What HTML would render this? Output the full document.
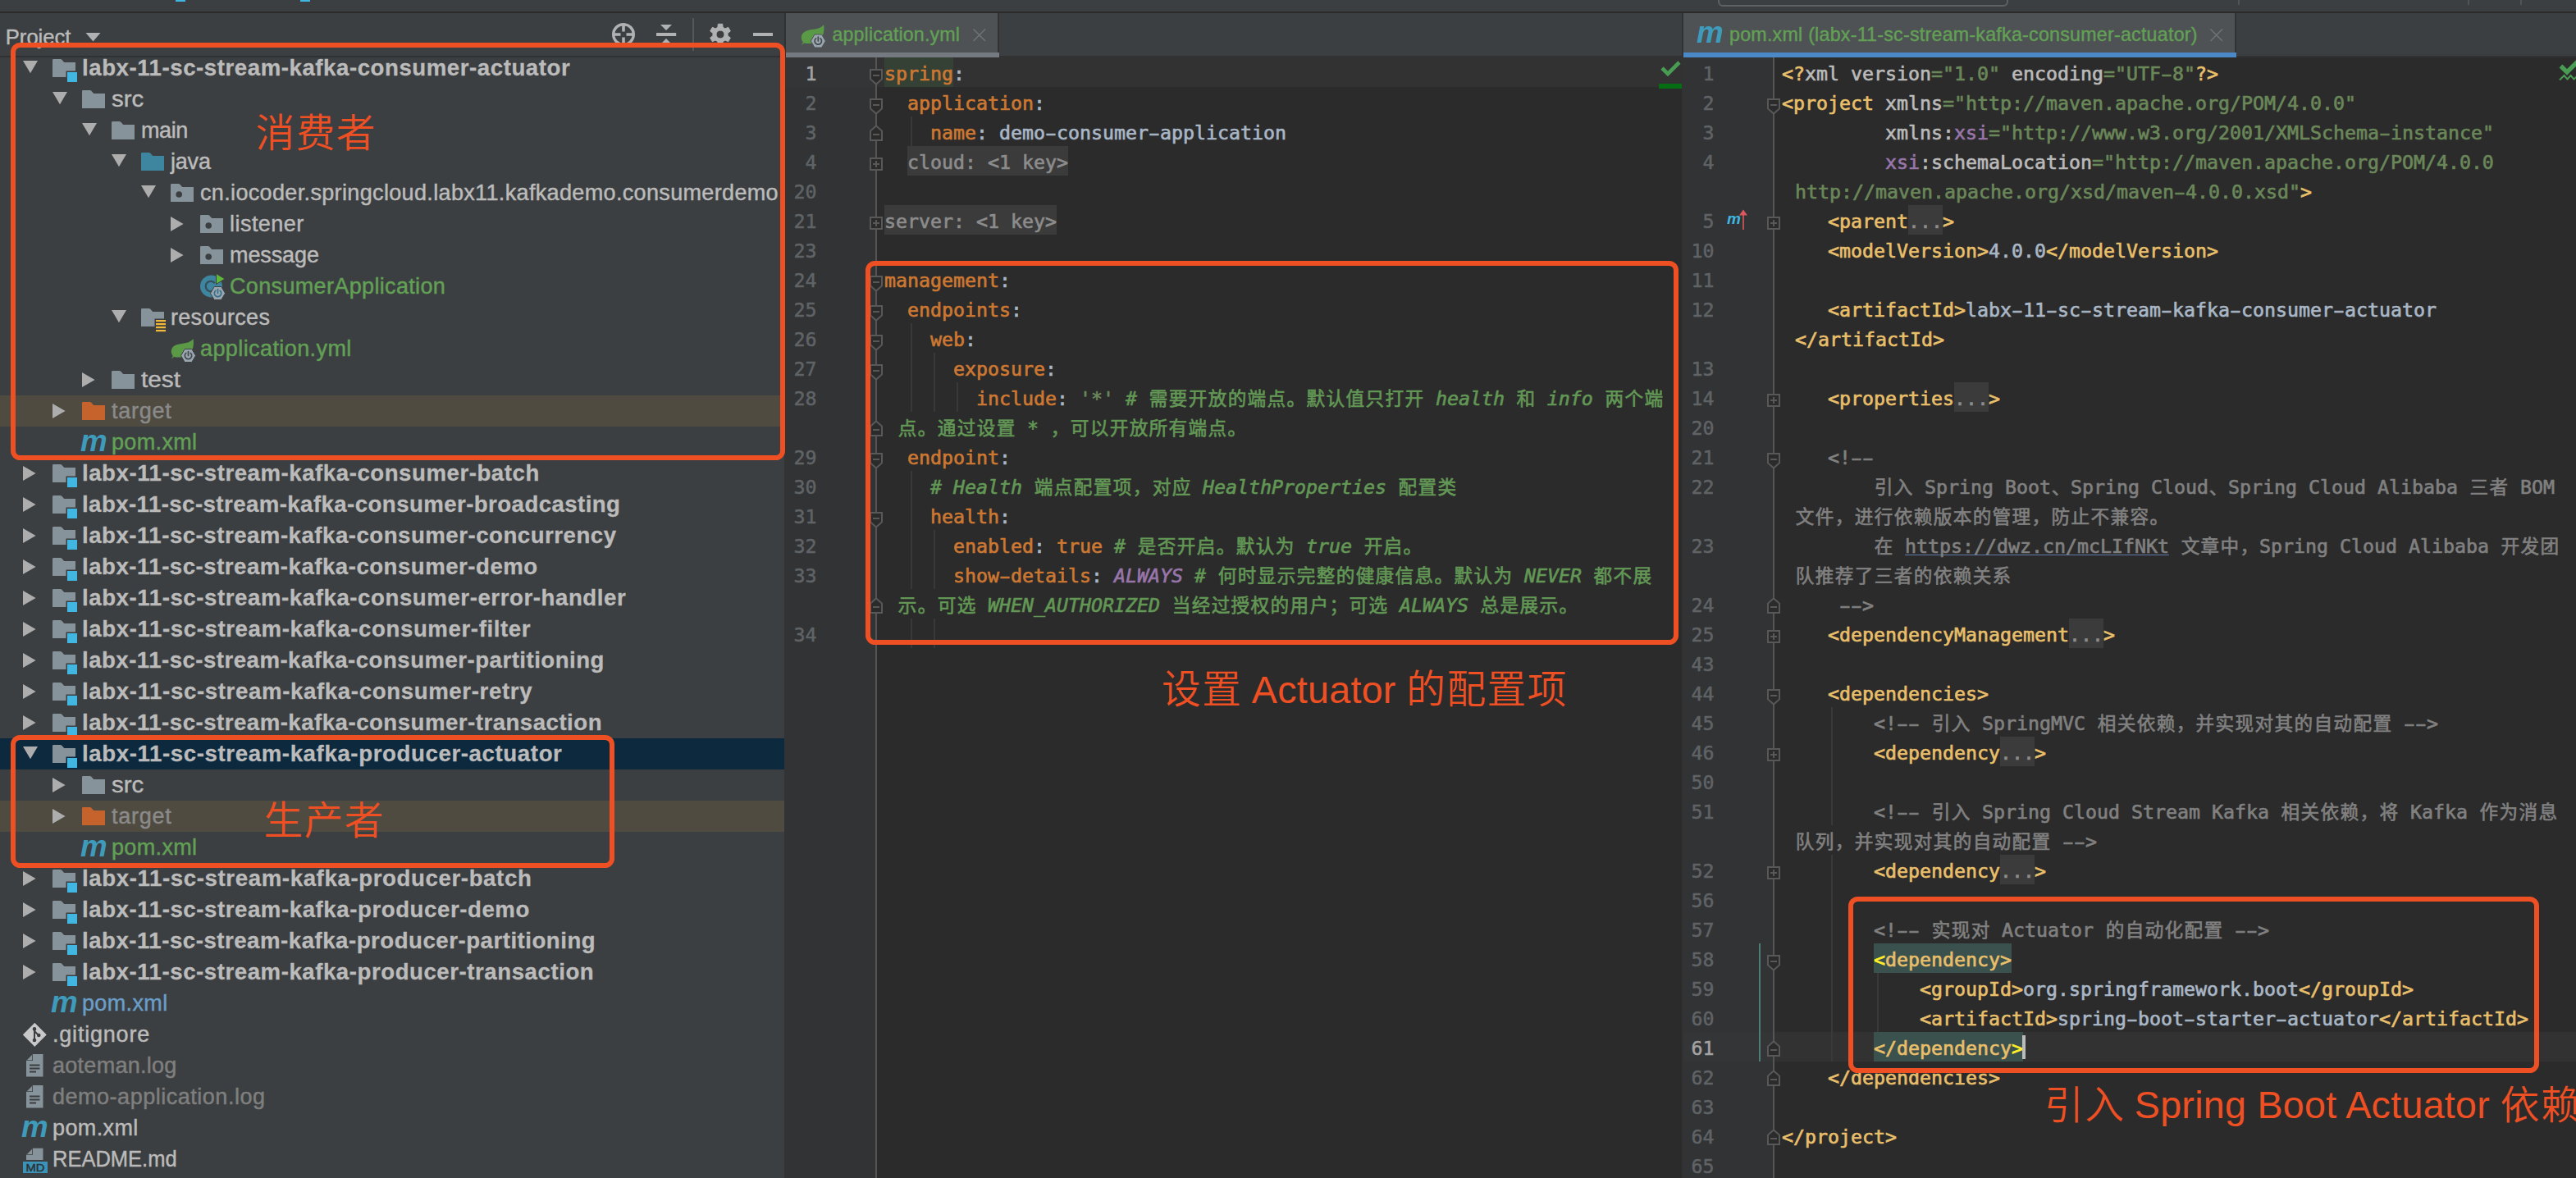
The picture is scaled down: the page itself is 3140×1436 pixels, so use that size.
<!DOCTYPE html><html><head><meta charset="utf-8"><title>IDE</title><style>
*{box-sizing:border-box}
html,body{margin:0;padding:0}
body{width:3140px;height:1436px;position:relative;overflow:hidden;background:#3c3f41;font-family:"Liberation Sans","Noto Sans CJK SC",sans-serif;color:#bbbbbb}
.abs,.abs *{position:absolute}
div{position:absolute}
span{position:static}
svg{position:absolute;overflow:visible}
.row{left:0;width:956px;height:38px}
.tt{-webkit-text-stroke:0.45px;white-space:pre;font-size:27px;line-height:38px;height:38px;top:0px;letter-spacing:-0.12px}
.b{-webkit-text-stroke:0.3px;font-weight:bold;font-size:27.6px;letter-spacing:0.3px}
.ln{-webkit-text-stroke:0.5px;white-space:pre;font-family:"DejaVu Sans Mono","Liberation Mono","Noto Sans CJK SC",monospace;font-size:23.25px;line-height:36px;height:36px;color:#606366;text-align:right;width:60px}
.cl{-webkit-text-stroke:0.65px;white-space:pre;font-family:"DejaVu Sans Mono","Liberation Mono","Noto Sans CJK SC",monospace;font-size:23.25px;line-height:36px;height:36px;color:#a9b7c6}
.cj{font-family:"Noto Sans CJK SC","WenQuanYi Zen Hei",sans-serif;font-size:22.6px;letter-spacing:1.4px;font-style:normal;line-height:0;position:relative;top:0.4px;left:0.7px}
.k{color:#cc7832}.s{color:#6a8759}.c{color:#629755;font-style:italic}.p{color:#9876aa}.pi{color:#9876aa;font-style:italic}
.t{color:#e8bf6a}.a{color:#bababa}.g{color:#808080}.f{color:#8c8c8c;background:#3b3b3b;display:inline-block;height:36px;line-height:36px;vertical-align:top;margin-top:-2px;padding-top:2px}
.w{display:inline-block;width:16px}.h{display:inline-block;transform:scaleX(1.7)}.y{color:#ffef28}.lk{color:#808080;text-decoration:underline;text-decoration-color:#5f7aa8;text-decoration-thickness:1.4px;text-underline-offset:1.6px;text-decoration-skip-ink:none}
.ann{color:#ef5023;font-size:47px;letter-spacing:0;line-height:60px;white-space:pre;font-family:"Liberation Sans","Noto Sans CJK SC",sans-serif}
.box{border:6.3px solid #ef5023;border-radius:11.5px}
</style></head><body>
<div style="left:0;top:0;width:3140px;height:14px;background:#3c3f41"></div>
<div style="left:0;top:14px;width:3140px;height:2px;background:#2b2b2b"></div>
<div style="left:214px;top:0;width:12px;height:2px;background:#40b6e0"></div>
<div style="left:366px;top:0;width:12px;height:2px;background:#40b6e0"></div>
<div style="left:2094px;top:-10px;width:354px;height:18px;border:2px solid #5e6163;border-radius:6px;background:#3c3f41"></div>
<div style="left:2728px;top:0;width:2px;height:6px;background:#515456"></div>
<div style="left:3008px;top:0;width:2px;height:6px;background:#515456"></div>
<div style="left:3072px;top:0;width:2px;height:6px;background:#515456"></div>
<div id="tree" style="left:0;top:16px;width:956px;height:1420px;background:#3c3f41;overflow:hidden">
<div style="left:6.8px;top:12.5px;font-size:25.6px;line-height:32px;color:#bbbbbb;white-space:pre;-webkit-text-stroke:0.4px">Project</div>
<svg style="left:104px;top:24px" width="20" height="12" viewBox="0 0 20 12"><path d="M0.5,0 L18.5,0 L9.5,10.5 Z" fill="#afb1b3"/></svg>
<svg style="left:744px;top:10px" width="32" height="32" viewBox="0 0 32 32"><circle cx="16" cy="16" r="12.3" fill="none" stroke="#afb1b3" stroke-width="3.4"/><path d="M16,4 L16,12.5 M16,19.5 L16,28 M4,16 L12.5,16 M19.5,16 L28,16" stroke="#afb1b3" stroke-width="3.6"/></svg>
<svg style="left:798px;top:12px" width="28" height="30" viewBox="0 0 28 30"><rect x="2" y="12" width="24.2" height="4" fill="#afb1b3"/><path d="M7,2 L21,2 L14,9 Z" fill="#afb1b3"/><path d="M7,26 L21,26 L14,19 Z" fill="#afb1b3"/></svg>
<div style="left:844px;top:6px;width:2px;height:40px;background:#55585a"></div>
<svg style="left:862px;top:10px" width="32" height="32" viewBox="0 0 32 32"><path fill-rule="evenodd" d="M12.88,7.34 L13.30,3.28 L18.70,3.28 L19.12,7.34 L21.94,8.97 L25.66,7.30 L28.36,11.98 L25.05,14.37 L25.05,17.63 L28.36,20.02 L25.66,24.70 L21.94,23.03 L19.12,24.66 L18.70,28.72 L13.30,28.72 L12.88,24.66 L10.06,23.03 L6.34,24.70 L3.64,20.02 L6.95,17.63 L6.95,14.37 L3.64,11.98 L6.34,7.30 L10.06,8.97 Z M21.0,16 A5.0,5.0 0 1 0 11.0,16 A5.0,5.0 0 1 0 21.0,16 Z" fill="#afb1b3" stroke="#afb1b3" stroke-width="1" stroke-linejoin="round"/></svg>
<div style="left:918px;top:24px;width:24.3px;height:4px;background:#afb1b3"></div>
<div style="left:0;top:52px;width:956px;height:2px;background:#2f3133"></div>
<div class="row" style="top:48px;">
<svg style="left:28px;top:10.4px" width="18" height="16" viewBox="0 0 18 16"><path d="M0,0 L18,0 L9,15.2 Z" fill="#adadad"/></svg>
<svg style="left:64px;top:8px" width="40" height="34" viewBox="0 0 40 34"><path d="M0,1.2 Q0,0 1.2,0 L9.6,0 Q10.6,0 11.3,0.8 L14.2,4 L28,4 L28,22 L0,22 Z" fill="#87939a"/><rect x="16.5" y="14.5" width="15" height="15" fill="#3c3f41"/><rect x="18" y="16" width="12" height="12" fill="#40b6e0"/></svg>
<div class="tt b" style="left:100px;color:#bbbbbb;letter-spacing:0.565px">labx-11-sc-stream-kafka-consumer-actuator</div>
</div>
<div class="row" style="top:86px;">
<svg style="left:64px;top:10.4px" width="18" height="16" viewBox="0 0 18 16"><path d="M0,0 L18,0 L9,15.2 Z" fill="#adadad"/></svg>
<svg style="left:100px;top:8px" width="40" height="34" viewBox="0 0 40 34"><path d="M0,1.2 Q0,0 1.2,0 L9.6,0 Q10.6,0 11.3,0.8 L14.2,4 L28,4 L28,22 L0,22 Z" fill="#87939a"/></svg>
<div class="tt" style="left:136px;color:#bbbbbb;letter-spacing:0;transform:scaleX(1.0889);transform-origin:0 50%">src</div>
</div>
<div class="row" style="top:124px;">
<svg style="left:100px;top:10.4px" width="18" height="16" viewBox="0 0 18 16"><path d="M0,0 L18,0 L9,15.2 Z" fill="#adadad"/></svg>
<svg style="left:136px;top:8px" width="40" height="34" viewBox="0 0 40 34"><path d="M0,1.2 Q0,0 1.2,0 L9.6,0 Q10.6,0 11.3,0.8 L14.2,4 L28,4 L28,22 L0,22 Z" fill="#87939a"/></svg>
<div class="tt" style="left:172px;color:#bbbbbb;letter-spacing:-0.383px">main</div>
</div>
<div class="row" style="top:162px;">
<svg style="left:136px;top:10.4px" width="18" height="16" viewBox="0 0 18 16"><path d="M0,0 L18,0 L9,15.2 Z" fill="#adadad"/></svg>
<svg style="left:172px;top:8px" width="40" height="34" viewBox="0 0 40 34"><path d="M0,1.2 Q0,0 1.2,0 L9.6,0 Q10.6,0 11.3,0.8 L14.2,4 L28,4 L28,22 L0,22 Z" fill="#3e86a0"/></svg>
<div class="tt" style="left:208px;color:#bbbbbb;letter-spacing:-0.208px">java</div>
</div>
<div class="row" style="top:200px;">
<svg style="left:172px;top:10.4px" width="18" height="16" viewBox="0 0 18 16"><path d="M0,0 L18,0 L9,15.2 Z" fill="#adadad"/></svg>
<svg style="left:208px;top:8px" width="40" height="34" viewBox="0 0 40 34"><path d="M0,1.2 Q0,0 1.2,0 L9.6,0 Q10.6,0 11.3,0.8 L14.2,4 L28,4 L28,22 L0,22 Z" fill="#87939a"/><circle cx="10.2" cy="13" r="3.8" fill="#3c3f41"/></svg>
<div class="tt" style="left:244px;color:#bbbbbb;letter-spacing:0.348px">cn.iocoder.springcloud.labx11.kafkademo.consumerdemo</div>
</div>
<div class="row" style="top:238px;">
<svg style="left:208px;top:10px" width="18" height="18" viewBox="0 0 18 18"><path d="M0,0 L15.6,9 L0,18 Z" fill="#adadad"/></svg>
<svg style="left:244px;top:8px" width="40" height="34" viewBox="0 0 40 34"><path d="M0,1.2 Q0,0 1.2,0 L9.6,0 Q10.6,0 11.3,0.8 L14.2,4 L28,4 L28,22 L0,22 Z" fill="#87939a"/><circle cx="10.2" cy="13" r="3.8" fill="#3c3f41"/></svg>
<div class="tt" style="left:280px;color:#bbbbbb;letter-spacing:0.469px">listener</div>
</div>
<div class="row" style="top:276px;">
<svg style="left:208px;top:10px" width="18" height="18" viewBox="0 0 18 18"><path d="M0,0 L15.6,9 L0,18 Z" fill="#adadad"/></svg>
<svg style="left:244px;top:8px" width="40" height="34" viewBox="0 0 40 34"><path d="M0,1.2 Q0,0 1.2,0 L9.6,0 Q10.6,0 11.3,0.8 L14.2,4 L28,4 L28,22 L0,22 Z" fill="#87939a"/><circle cx="10.2" cy="13" r="3.8" fill="#3c3f41"/></svg>
<div class="tt" style="left:280px;color:#bbbbbb;letter-spacing:-0.109px">message</div>
</div>
<div class="row" style="top:314px;">
<svg style="left:244px;top:4px" width="32" height="32" viewBox="0 0 32 32"><circle cx="13.5" cy="15" r="13.5" fill="#3e86a0"/><path d="M17.8,11.2 A6.2,6.2 0 1 0 17.8,18.8" fill="none" stroke="#35505c" stroke-width="2.3"/><path d="M19.5,-0.5 L30.2,6 L19.5,12.5 Z" fill="#5fb83a" stroke="#3c3f41" stroke-width="1"/><g transform="translate(12.5,15.5)"><path d="M4.7,0 L13.3,0 L18,8 L13.3,16 L4.7,16 L0,8 Z" fill="#9aa7b0" stroke="#3c3f41" stroke-width="1"/><path d="M6.3,4.8 A4.2,4.2 0 1 0 11.7,4.8" fill="none" stroke="#35718a" stroke-width="1.7" stroke-linecap="round"/><path d="M9,3 L9,8" stroke="#35718a" stroke-width="1.7" stroke-linecap="round"/></g></svg>
<div class="tt" style="left:280px;color:#62a055;letter-spacing:0.345px">ConsumerApplication</div>
</div>
<div class="row" style="top:352px;">
<svg style="left:136px;top:10.4px" width="18" height="16" viewBox="0 0 18 16"><path d="M0,0 L18,0 L9,15.2 Z" fill="#adadad"/></svg>
<svg style="left:172px;top:8px" width="40" height="34" viewBox="0 0 40 34"><path d="M0,1.2 Q0,0 1.2,0 L9.6,0 Q10.6,0 11.3,0.8 L14.2,4 L28,4 L28,22 L0,22 Z" fill="#87939a"/><rect x="16.5" y="12.5" width="15" height="17.5" fill="#3c3f41"/><rect x="18" y="14" width="12" height="2.2" fill="#f2b83a"/><rect x="18" y="18" width="12" height="2.2" fill="#f2b83a"/><rect x="18" y="22" width="12" height="2.2" fill="#f2b83a"/><rect x="18" y="26" width="12" height="2.2" fill="#f2b83a"/></svg>
<div class="tt" style="left:208px;color:#bbbbbb;letter-spacing:0.295px">resources</div>
</div>
<div class="row" style="top:390px;">
<svg style="left:208px;top:7px" width="32" height="32" viewBox="0 0 32 32"><path d="M27.5,0 C28.5,6 28,14 22,19 C16,24 8,22.5 4,22 C3,22.8 2,23.8 0.8,24.2 C1.5,23 2.3,22 2.8,21 C-1,16 0.5,9 8,7 C15,5.2 23,6 27.5,0 Z" fill="#5a9a47"/><g transform="translate(12.5,12.5)"><path d="M4.7,0 L13.3,0 L18,8 L13.3,16 L4.7,16 L0,8 Z" fill="#9aa7b0" stroke="#3c3f41" stroke-width="1"/><path d="M6.3,4.8 A4.2,4.2 0 1 0 11.7,4.8" fill="none" stroke="#43494c" stroke-width="1.7" stroke-linecap="round"/><path d="M9,3 L9,8" stroke="#43494c" stroke-width="1.7" stroke-linecap="round"/></g></svg>
<div class="tt" style="left:244px;color:#62a055;letter-spacing:0.407px">application.yml</div>
</div>
<div class="row" style="top:428px;">
<svg style="left:100px;top:10px" width="18" height="18" viewBox="0 0 18 18"><path d="M0,0 L15.6,9 L0,18 Z" fill="#adadad"/></svg>
<svg style="left:136px;top:8px" width="40" height="34" viewBox="0 0 40 34"><path d="M0,1.2 Q0,0 1.2,0 L9.6,0 Q10.6,0 11.3,0.8 L14.2,4 L28,4 L28,22 L0,22 Z" fill="#87939a"/></svg>
<div class="tt" style="left:172px;color:#bbbbbb;letter-spacing:0;transform:scaleX(1.1026);transform-origin:0 50%">test</div>
</div>
<div class="row" style="top:466px;background:#4f4b41;">
<svg style="left:64px;top:10px" width="18" height="18" viewBox="0 0 18 18"><path d="M0,0 L15.6,9 L0,18 Z" fill="#adadad"/></svg>
<svg style="left:100px;top:8px" width="40" height="34" viewBox="0 0 40 34"><path d="M0,1.2 Q0,0 1.2,0 L9.6,0 Q10.6,0 11.3,0.8 L14.2,4 L28,4 L28,22 L0,22 Z" fill="#c6632d"/></svg>
<div class="tt" style="left:136px;color:#8a8a8a;letter-spacing:0.726px">target</div>
</div>
<div class="row" style="top:504px;">
<div style="left:98px;top:-7px;width:40px;height:50px;font:italic bold 35px/50px 'Liberation Sans',sans-serif;color:#3f9bbb;transform:scale(1.05,1.04);transform-origin:0 50%">m</div>
<div class="tt" style="left:136px;color:#62a055;letter-spacing:0.341px">pom.xml</div>
</div>
<div class="row" style="top:542px;">
<svg style="left:28px;top:10px" width="18" height="18" viewBox="0 0 18 18"><path d="M0,0 L15.6,9 L0,18 Z" fill="#adadad"/></svg>
<svg style="left:64px;top:8px" width="40" height="34" viewBox="0 0 40 34"><path d="M0,1.2 Q0,0 1.2,0 L9.6,0 Q10.6,0 11.3,0.8 L14.2,4 L28,4 L28,22 L0,22 Z" fill="#87939a"/><rect x="16.5" y="14.5" width="15" height="15" fill="#3c3f41"/><rect x="18" y="16" width="12" height="12" fill="#40b6e0"/></svg>
<div class="tt b" style="left:100px;color:#bbbbbb;letter-spacing:0.554px">labx-11-sc-stream-kafka-consumer-batch</div>
</div>
<div class="row" style="top:580px;">
<svg style="left:28px;top:10px" width="18" height="18" viewBox="0 0 18 18"><path d="M0,0 L15.6,9 L0,18 Z" fill="#adadad"/></svg>
<svg style="left:64px;top:8px" width="40" height="34" viewBox="0 0 40 34"><path d="M0,1.2 Q0,0 1.2,0 L9.6,0 Q10.6,0 11.3,0.8 L14.2,4 L28,4 L28,22 L0,22 Z" fill="#87939a"/><rect x="16.5" y="14.5" width="15" height="15" fill="#3c3f41"/><rect x="18" y="16" width="12" height="12" fill="#40b6e0"/></svg>
<div class="tt b" style="left:100px;color:#bbbbbb;letter-spacing:0.444px">labx-11-sc-stream-kafka-consumer-broadcasting</div>
</div>
<div class="row" style="top:618px;">
<svg style="left:28px;top:10px" width="18" height="18" viewBox="0 0 18 18"><path d="M0,0 L15.6,9 L0,18 Z" fill="#adadad"/></svg>
<svg style="left:64px;top:8px" width="40" height="34" viewBox="0 0 40 34"><path d="M0,1.2 Q0,0 1.2,0 L9.6,0 Q10.6,0 11.3,0.8 L14.2,4 L28,4 L28,22 L0,22 Z" fill="#87939a"/><rect x="16.5" y="14.5" width="15" height="15" fill="#3c3f41"/><rect x="18" y="16" width="12" height="12" fill="#40b6e0"/></svg>
<div class="tt b" style="left:100px;color:#bbbbbb;letter-spacing:0.516px">labx-11-sc-stream-kafka-consumer-concurrency</div>
</div>
<div class="row" style="top:656px;">
<svg style="left:28px;top:10px" width="18" height="18" viewBox="0 0 18 18"><path d="M0,0 L15.6,9 L0,18 Z" fill="#adadad"/></svg>
<svg style="left:64px;top:8px" width="40" height="34" viewBox="0 0 40 34"><path d="M0,1.2 Q0,0 1.2,0 L9.6,0 Q10.6,0 11.3,0.8 L14.2,4 L28,4 L28,22 L0,22 Z" fill="#87939a"/><rect x="16.5" y="14.5" width="15" height="15" fill="#3c3f41"/><rect x="18" y="16" width="12" height="12" fill="#40b6e0"/></svg>
<div class="tt b" style="left:100px;color:#bbbbbb;letter-spacing:0.512px">labx-11-sc-stream-kafka-consumer-demo</div>
</div>
<div class="row" style="top:694px;">
<svg style="left:28px;top:10px" width="18" height="18" viewBox="0 0 18 18"><path d="M0,0 L15.6,9 L0,18 Z" fill="#adadad"/></svg>
<svg style="left:64px;top:8px" width="40" height="34" viewBox="0 0 40 34"><path d="M0,1.2 Q0,0 1.2,0 L9.6,0 Q10.6,0 11.3,0.8 L14.2,4 L28,4 L28,22 L0,22 Z" fill="#87939a"/><rect x="16.5" y="14.5" width="15" height="15" fill="#3c3f41"/><rect x="18" y="16" width="12" height="12" fill="#40b6e0"/></svg>
<div class="tt b" style="left:100px;color:#bbbbbb;letter-spacing:0.584px">labx-11-sc-stream-kafka-consumer-error-handler</div>
</div>
<div class="row" style="top:732px;">
<svg style="left:28px;top:10px" width="18" height="18" viewBox="0 0 18 18"><path d="M0,0 L15.6,9 L0,18 Z" fill="#adadad"/></svg>
<svg style="left:64px;top:8px" width="40" height="34" viewBox="0 0 40 34"><path d="M0,1.2 Q0,0 1.2,0 L9.6,0 Q10.6,0 11.3,0.8 L14.2,4 L28,4 L28,22 L0,22 Z" fill="#87939a"/><rect x="16.5" y="14.5" width="15" height="15" fill="#3c3f41"/><rect x="18" y="16" width="12" height="12" fill="#40b6e0"/></svg>
<div class="tt b" style="left:100px;color:#bbbbbb;letter-spacing:0.621px">labx-11-sc-stream-kafka-consumer-filter</div>
</div>
<div class="row" style="top:770px;">
<svg style="left:28px;top:10px" width="18" height="18" viewBox="0 0 18 18"><path d="M0,0 L15.6,9 L0,18 Z" fill="#adadad"/></svg>
<svg style="left:64px;top:8px" width="40" height="34" viewBox="0 0 40 34"><path d="M0,1.2 Q0,0 1.2,0 L9.6,0 Q10.6,0 11.3,0.8 L14.2,4 L28,4 L28,22 L0,22 Z" fill="#87939a"/><rect x="16.5" y="14.5" width="15" height="15" fill="#3c3f41"/><rect x="18" y="16" width="12" height="12" fill="#40b6e0"/></svg>
<div class="tt b" style="left:100px;color:#bbbbbb;letter-spacing:0.487px">labx-11-sc-stream-kafka-consumer-partitioning</div>
</div>
<div class="row" style="top:808px;">
<svg style="left:28px;top:10px" width="18" height="18" viewBox="0 0 18 18"><path d="M0,0 L15.6,9 L0,18 Z" fill="#adadad"/></svg>
<svg style="left:64px;top:8px" width="40" height="34" viewBox="0 0 40 34"><path d="M0,1.2 Q0,0 1.2,0 L9.6,0 Q10.6,0 11.3,0.8 L14.2,4 L28,4 L28,22 L0,22 Z" fill="#87939a"/><rect x="16.5" y="14.5" width="15" height="15" fill="#3c3f41"/><rect x="18" y="16" width="12" height="12" fill="#40b6e0"/></svg>
<div class="tt b" style="left:100px;color:#bbbbbb;letter-spacing:0.649px">labx-11-sc-stream-kafka-consumer-retry</div>
</div>
<div class="row" style="top:846px;">
<svg style="left:28px;top:10px" width="18" height="18" viewBox="0 0 18 18"><path d="M0,0 L15.6,9 L0,18 Z" fill="#adadad"/></svg>
<svg style="left:64px;top:8px" width="40" height="34" viewBox="0 0 40 34"><path d="M0,1.2 Q0,0 1.2,0 L9.6,0 Q10.6,0 11.3,0.8 L14.2,4 L28,4 L28,22 L0,22 Z" fill="#87939a"/><rect x="16.5" y="14.5" width="15" height="15" fill="#3c3f41"/><rect x="18" y="16" width="12" height="12" fill="#40b6e0"/></svg>
<div class="tt b" style="left:100px;color:#bbbbbb;letter-spacing:0.502px">labx-11-sc-stream-kafka-consumer-transaction</div>
</div>
<div class="row" style="top:884px;background:#0d293e;">
<svg style="left:28px;top:10.4px" width="18" height="16" viewBox="0 0 18 16"><path d="M0,0 L18,0 L9,15.2 Z" fill="#adadad"/></svg>
<svg style="left:64px;top:8px" width="40" height="34" viewBox="0 0 40 34"><path d="M0,1.2 Q0,0 1.2,0 L9.6,0 Q10.6,0 11.3,0.8 L14.2,4 L28,4 L28,22 L0,22 Z" fill="#87939a"/><rect x="16.5" y="14.5" width="15" height="15" fill="#0d293e"/><rect x="18" y="16" width="12" height="12" fill="#40b6e0"/></svg>
<div class="tt b" style="left:100px;color:#bbbbbb;letter-spacing:0.628px">labx-11-sc-stream-kafka-producer-actuator</div>
</div>
<div class="row" style="top:922px;">
<svg style="left:64px;top:10px" width="18" height="18" viewBox="0 0 18 18"><path d="M0,0 L15.6,9 L0,18 Z" fill="#adadad"/></svg>
<svg style="left:100px;top:8px" width="40" height="34" viewBox="0 0 40 34"><path d="M0,1.2 Q0,0 1.2,0 L9.6,0 Q10.6,0 11.3,0.8 L14.2,4 L28,4 L28,22 L0,22 Z" fill="#87939a"/></svg>
<div class="tt" style="left:136px;color:#bbbbbb;letter-spacing:0;transform:scaleX(1.0889);transform-origin:0 50%">src</div>
</div>
<div class="row" style="top:960px;background:#4f4b41;">
<svg style="left:64px;top:10px" width="18" height="18" viewBox="0 0 18 18"><path d="M0,0 L15.6,9 L0,18 Z" fill="#adadad"/></svg>
<svg style="left:100px;top:8px" width="40" height="34" viewBox="0 0 40 34"><path d="M0,1.2 Q0,0 1.2,0 L9.6,0 Q10.6,0 11.3,0.8 L14.2,4 L28,4 L28,22 L0,22 Z" fill="#c6632d"/></svg>
<div class="tt" style="left:136px;color:#8a8a8a;letter-spacing:0.726px">target</div>
</div>
<div class="row" style="top:998px;">
<div style="left:98px;top:-7px;width:40px;height:50px;font:italic bold 35px/50px 'Liberation Sans',sans-serif;color:#3f9bbb;transform:scale(1.05,1.04);transform-origin:0 50%">m</div>
<div class="tt" style="left:136px;color:#62a055;letter-spacing:0.341px">pom.xml</div>
</div>
<div class="row" style="top:1036px;">
<svg style="left:28px;top:10px" width="18" height="18" viewBox="0 0 18 18"><path d="M0,0 L15.6,9 L0,18 Z" fill="#adadad"/></svg>
<svg style="left:64px;top:8px" width="40" height="34" viewBox="0 0 40 34"><path d="M0,1.2 Q0,0 1.2,0 L9.6,0 Q10.6,0 11.3,0.8 L14.2,4 L28,4 L28,22 L0,22 Z" fill="#87939a"/><rect x="16.5" y="14.5" width="15" height="15" fill="#3c3f41"/><rect x="18" y="16" width="12" height="12" fill="#40b6e0"/></svg>
<div class="tt b" style="left:100px;color:#bbbbbb;letter-spacing:0.629px">labx-11-sc-stream-kafka-producer-batch</div>
</div>
<div class="row" style="top:1074px;">
<svg style="left:28px;top:10px" width="18" height="18" viewBox="0 0 18 18"><path d="M0,0 L15.6,9 L0,18 Z" fill="#adadad"/></svg>
<svg style="left:64px;top:8px" width="40" height="34" viewBox="0 0 40 34"><path d="M0,1.2 Q0,0 1.2,0 L9.6,0 Q10.6,0 11.3,0.8 L14.2,4 L28,4 L28,22 L0,22 Z" fill="#87939a"/><rect x="16.5" y="14.5" width="15" height="15" fill="#3c3f41"/><rect x="18" y="16" width="12" height="12" fill="#40b6e0"/></svg>
<div class="tt b" style="left:100px;color:#bbbbbb;letter-spacing:0.579px">labx-11-sc-stream-kafka-producer-demo</div>
</div>
<div class="row" style="top:1112px;">
<svg style="left:28px;top:10px" width="18" height="18" viewBox="0 0 18 18"><path d="M0,0 L15.6,9 L0,18 Z" fill="#adadad"/></svg>
<svg style="left:64px;top:8px" width="40" height="34" viewBox="0 0 40 34"><path d="M0,1.2 Q0,0 1.2,0 L9.6,0 Q10.6,0 11.3,0.8 L14.2,4 L28,4 L28,22 L0,22 Z" fill="#87939a"/><rect x="16.5" y="14.5" width="15" height="15" fill="#3c3f41"/><rect x="18" y="16" width="12" height="12" fill="#40b6e0"/></svg>
<div class="tt b" style="left:100px;color:#bbbbbb;letter-spacing:0.524px">labx-11-sc-stream-kafka-producer-partitioning</div>
</div>
<div class="row" style="top:1150px;">
<svg style="left:28px;top:10px" width="18" height="18" viewBox="0 0 18 18"><path d="M0,0 L15.6,9 L0,18 Z" fill="#adadad"/></svg>
<svg style="left:64px;top:8px" width="40" height="34" viewBox="0 0 40 34"><path d="M0,1.2 Q0,0 1.2,0 L9.6,0 Q10.6,0 11.3,0.8 L14.2,4 L28,4 L28,22 L0,22 Z" fill="#87939a"/><rect x="16.5" y="14.5" width="15" height="15" fill="#3c3f41"/><rect x="18" y="16" width="12" height="12" fill="#40b6e0"/></svg>
<div class="tt b" style="left:100px;color:#bbbbbb;letter-spacing:0.559px">labx-11-sc-stream-kafka-producer-transaction</div>
</div>
<div class="row" style="top:1188px;">
<div style="left:62px;top:-7px;width:40px;height:50px;font:italic bold 35px/50px 'Liberation Sans',sans-serif;color:#3f9bbb;transform:scale(1.05,1.04);transform-origin:0 50%">m</div>
<div class="tt" style="left:100px;color:#6a9ec8;letter-spacing:0.355px">pom.xml</div>
</div>
<div class="row" style="top:1226px;">
<svg style="left:28px;top:5px" width="30" height="30" viewBox="0 0 30 30"><path d="M14.3,0.6 L28,14.3 L14.3,28 L0.6,14.3 Z" fill="#c9c9c9" stroke="#c9c9c9" stroke-width="1.2" stroke-linejoin="round"/><path d="M14,7 L14,21 M14,10 L19,15" stroke="#3c3f41" stroke-width="2" fill="none"/><circle cx="14" cy="7.4" r="2.3" fill="#3c3f41"/><circle cx="14" cy="21" r="2.3" fill="#3c3f41"/><circle cx="19.3" cy="15" r="2.3" fill="#3c3f41"/></svg>
<div class="tt" style="left:64px;color:#bbbbbb;letter-spacing:0.792px">.gitignore</div>
</div>
<div class="row" style="top:1264px;">
<svg style="left:32px;top:5px" width="22" height="30" viewBox="0 0 22 30"><path d="M8,0 L20.5,0 L20.5,27.6 L0,27.6 L0,8 Z" fill="#87939a"/><path d="M0,8 L8,0 L8,8 Z" fill="#3c3f41"/><path d="M1,7.2 L7.2,1 L7.2,7.2 Z" fill="#87939a"/><rect x="4" y="12.5" width="12.5" height="2" fill="#3c3f41"/><rect x="4" y="16.5" width="12.5" height="2" fill="#3c3f41"/><rect x="4" y="20.5" width="8" height="2" fill="#3c3f41"/></svg>
<div class="tt" style="left:64px;color:#7f7f7f;letter-spacing:0.272px">aoteman.log</div>
</div>
<div class="row" style="top:1302px;">
<svg style="left:32px;top:5px" width="22" height="30" viewBox="0 0 22 30"><path d="M8,0 L20.5,0 L20.5,27.6 L0,27.6 L0,8 Z" fill="#87939a"/><path d="M0,8 L8,0 L8,8 Z" fill="#3c3f41"/><path d="M1,7.2 L7.2,1 L7.2,7.2 Z" fill="#87939a"/><rect x="4" y="12.5" width="12.5" height="2" fill="#3c3f41"/><rect x="4" y="16.5" width="12.5" height="2" fill="#3c3f41"/><rect x="4" y="20.5" width="8" height="2" fill="#3c3f41"/></svg>
<div class="tt" style="left:64px;color:#7f7f7f;letter-spacing:0.516px">demo-application.log</div>
</div>
<div class="row" style="top:1340px;">
<div style="left:26px;top:-7px;width:40px;height:50px;font:italic bold 35px/50px 'Liberation Sans',sans-serif;color:#3f9bbb;transform:scale(1.05,1.04);transform-origin:0 50%">m</div>
<div class="tt" style="left:64px;color:#bbbbbb;letter-spacing:0.383px">pom.xml</div>
</div>
<div class="row" style="top:1378px;">
<svg style="left:28px;top:5px" width="32" height="32" viewBox="0 0 32 32"><path d="M12,0.8 L24.5,0.8 L24.5,15 L4,15 L4,8.8 Z" fill="#87939a"/><path d="M4,8.8 L12,0.8 L12,8.8 Z" fill="#3c3f41"/><path d="M5,8 L11.2,1.8 L11.2,8 Z" fill="#87939a"/><rect x="0" y="17" width="30" height="14" fill="#3b93b8"/><text x="3.5" y="29" font-family="Liberation Sans, sans-serif" font-weight="normal" font-size="13.5" fill="#2b3336" stroke="#2b3336" stroke-width="0.5" textLength="23" lengthAdjust="spacingAndGlyphs">MD</text></svg>
<div class="tt" style="left:64px;color:#bbbbbb;letter-spacing:0;transform:scaleX(0.9444);transform-origin:0 50%">README.md</div>
</div>
</div>
<div style="left:956px;top:16px;width:2px;height:52px;background:#2f3133"></div>
<div style="left:958px;top:16px;width:1092px;height:52px;background:#3c3f41"></div>
<div style="left:958px;top:16px;width:258px;height:48px;background:#4e5254"></div>
<div style="left:1216px;top:16px;width:2px;height:48px;background:#323232"></div>
<svg style="left:975.5px;top:30px" width="32" height="32" viewBox="0 0 32 32"><path transform="scale(1.02)" d="M27.5,0 C28.5,6 28,14 22,19 C16,24 8,22.5 4,22 C3,22.8 2,23.8 0.8,24.2 C1.5,23 2.3,22 2.8,21 C-1,16 0.5,9 8,7 C15,5.2 23,6 27.5,0 Z" fill="#5a9a47"/><g transform="translate(12.3,12)"><path d="M4.7,0 L13.3,0 L18,8 L13.3,16 L4.7,16 L0,8 Z" fill="#9aa7b0" stroke="#4e5254" stroke-width="1"/><path d="M6.3,4.8 A4.2,4.2 0 1 0 11.7,4.8" fill="none" stroke="#43494c" stroke-width="1.7" stroke-linecap="round"/><path d="M9,3 L9,8" stroke="#43494c" stroke-width="1.7" stroke-linecap="round"/></g></svg>
<div style="left:1014.5px;top:26px;font-size:23.2px;line-height:32px;color:#62a055;white-space:pre;-webkit-text-stroke:0.4px;letter-spacing:0.14px">application.yml</div>
<svg style="left:1186px;top:34.5px" width="16" height="16" viewBox="0 0 16 16"><path d="M0.5,0.5 L15,15 M15,0.5 L0.5,15" stroke="#6e7275" stroke-width="1.6"/></svg>
<div style="left:956px;top:68px;width:1094px;height:1368px;background:#2b2b2b"></div>
<div style="left:956px;top:68px;width:112px;height:1368px;background:#313335"></div>
<div style="left:1068px;top:68px;width:982px;height:38px;background:#323232"></div>
<div style="left:956px;top:68px;width:112px;height:38px;background:#333537"></div>
<div style="left:958px;top:64px;width:260px;height:6px;background:#747a80"></div>
<div style="left:1067px;top:70px;width:2px;height:1366px;background:#555555"></div>
<div style="left:1078px;top:70px;width:84px;height:36px;background:#344134"></div>
<div style="left:1110px;top:142px;width:2px;height:36px;background:#393939"></div>
<div style="left:1110px;top:394px;width:2px;height:108px;background:#393939"></div>
<div style="left:1138px;top:430px;width:2px;height:72px;background:#393939"></div>
<div style="left:1166px;top:466px;width:2px;height:36px;background:#393939"></div>
<div style="left:1110px;top:574px;width:2px;height:144px;background:#393939"></div>
<div style="left:1110px;top:754px;width:2px;height:36px;background:#393939"></div>
<div style="left:1138px;top:646px;width:2px;height:72px;background:#393939"></div>
<div style="left:1138px;top:754px;width:2px;height:36px;background:#393939"></div>
<div class="ln" style="left:935.5px;top:72px;color:#a4a3a3">1</div>
<svg style="left:1060px;top:84px" width="16" height="20" viewBox="0 0 16 20"><path d="M1,1 L15,1 L15,12.4 L8,18.6 L1,12.4 Z" fill="#2b2b2b" stroke="#585858" stroke-width="2"/><rect x="4" y="7" width="8" height="2" fill="#585858"/></svg>
<div class="cl" style="left:1078px;top:72px"><span class="k">spring</span>:</div>
<div class="ln" style="left:935.5px;top:108px;color:#606366">2</div>
<svg style="left:1060px;top:120px" width="16" height="20" viewBox="0 0 16 20"><path d="M1,1 L15,1 L15,12.4 L8,18.6 L1,12.4 Z" fill="#2b2b2b" stroke="#585858" stroke-width="2"/><rect x="4" y="7" width="8" height="2" fill="#585858"/></svg>
<div class="cl" style="left:1078px;top:108px">  <span class="k">application</span>:</div>
<div class="ln" style="left:935.5px;top:144px;color:#606366">3</div>
<svg style="left:1060px;top:152px" width="16" height="20" viewBox="0 0 16 20"><path d="M1,19 L15,19 L15,7.6 L8,1.4 L1,7.6 Z" fill="#2b2b2b" stroke="#585858" stroke-width="2"/><rect x="4" y="11" width="8" height="2" fill="#585858"/></svg>
<div class="cl" style="left:1078px;top:144px">    <span class="k">name</span>: demo<span class="h">-</span>consumer<span class="h">-</span>application</div>
<div class="ln" style="left:935.5px;top:180px;color:#606366">4</div>
<svg style="left:1060px;top:192px" width="16" height="16" viewBox="0 0 16 16"><rect x="1" y="1" width="14" height="14" fill="#2b2b2b" stroke="#585858" stroke-width="2"/><rect x="4" y="7" width="8" height="2" fill="#585858"/><rect x="7" y="4" width="2" height="8" fill="#585858"/></svg>
<div class="cl" style="left:1078px;top:180px">  <span class="f">cloud: &lt;1 key&gt;</span></div>
<div class="ln" style="left:935.5px;top:216px;color:#606366">20</div>
<div class="ln" style="left:935.5px;top:252px;color:#606366">21</div>
<svg style="left:1060px;top:264px" width="16" height="16" viewBox="0 0 16 16"><rect x="1" y="1" width="14" height="14" fill="#2b2b2b" stroke="#585858" stroke-width="2"/><rect x="4" y="7" width="8" height="2" fill="#585858"/><rect x="7" y="4" width="2" height="8" fill="#585858"/></svg>
<div class="cl" style="left:1078px;top:252px"><span class="f">server: &lt;1 key&gt;</span></div>
<div class="ln" style="left:935.5px;top:288px;color:#606366">23</div>
<div class="ln" style="left:935.5px;top:324px;color:#606366">24</div>
<svg style="left:1060px;top:336px" width="16" height="20" viewBox="0 0 16 20"><path d="M1,1 L15,1 L15,12.4 L8,18.6 L1,12.4 Z" fill="#2b2b2b" stroke="#585858" stroke-width="2"/><rect x="4" y="7" width="8" height="2" fill="#585858"/></svg>
<div class="cl" style="left:1078px;top:324px"><span class="k">management</span>:</div>
<div class="ln" style="left:935.5px;top:360px;color:#606366">25</div>
<svg style="left:1060px;top:372px" width="16" height="20" viewBox="0 0 16 20"><path d="M1,1 L15,1 L15,12.4 L8,18.6 L1,12.4 Z" fill="#2b2b2b" stroke="#585858" stroke-width="2"/><rect x="4" y="7" width="8" height="2" fill="#585858"/></svg>
<div class="cl" style="left:1078px;top:360px">  <span class="k">endpoints</span>:</div>
<div class="ln" style="left:935.5px;top:396px;color:#606366">26</div>
<svg style="left:1060px;top:408px" width="16" height="20" viewBox="0 0 16 20"><path d="M1,1 L15,1 L15,12.4 L8,18.6 L1,12.4 Z" fill="#2b2b2b" stroke="#585858" stroke-width="2"/><rect x="4" y="7" width="8" height="2" fill="#585858"/></svg>
<div class="cl" style="left:1078px;top:396px">    <span class="k">web</span>:</div>
<div class="ln" style="left:935.5px;top:432px;color:#606366">27</div>
<svg style="left:1060px;top:444px" width="16" height="20" viewBox="0 0 16 20"><path d="M1,1 L15,1 L15,12.4 L8,18.6 L1,12.4 Z" fill="#2b2b2b" stroke="#585858" stroke-width="2"/><rect x="4" y="7" width="8" height="2" fill="#585858"/></svg>
<div class="cl" style="left:1078px;top:432px">      <span class="k">exposure</span>:</div>
<div class="ln" style="left:935.5px;top:468px;color:#606366">28</div>
<div class="cl" style="left:1078px;top:468px">        <span class="k">include</span>: <span class="s">'*'</span> <span class="c"># <span class="cj">需要开放的端点。默认值只打开</span> health <span class="cj">和</span> info <span class="cj">两个端</span></span></div>
<svg style="left:1060px;top:512px" width="16" height="20" viewBox="0 0 16 20"><path d="M1,19 L15,19 L15,7.6 L8,1.4 L1,7.6 Z" fill="#2b2b2b" stroke="#585858" stroke-width="2"/><rect x="4" y="11" width="8" height="2" fill="#585858"/></svg>
<div class="cl" style="left:1078px;top:504px"><span class="w"></span><span class="c"><span class="cj">点。通过设置</span> * <span class="cj">，可以开放所有端点。</span></span></div>
<div class="ln" style="left:935.5px;top:540px;color:#606366">29</div>
<svg style="left:1060px;top:552px" width="16" height="20" viewBox="0 0 16 20"><path d="M1,1 L15,1 L15,12.4 L8,18.6 L1,12.4 Z" fill="#2b2b2b" stroke="#585858" stroke-width="2"/><rect x="4" y="7" width="8" height="2" fill="#585858"/></svg>
<div class="cl" style="left:1078px;top:540px">  <span class="k">endpoint</span>:</div>
<div class="ln" style="left:935.5px;top:576px;color:#606366">30</div>
<div class="cl" style="left:1078px;top:576px">    <span class="c"># Health <span class="cj">端点配置项，对应</span> HealthProperties <span class="cj">配置类</span></span></div>
<div class="ln" style="left:935.5px;top:612px;color:#606366">31</div>
<svg style="left:1060px;top:624px" width="16" height="20" viewBox="0 0 16 20"><path d="M1,1 L15,1 L15,12.4 L8,18.6 L1,12.4 Z" fill="#2b2b2b" stroke="#585858" stroke-width="2"/><rect x="4" y="7" width="8" height="2" fill="#585858"/></svg>
<div class="cl" style="left:1078px;top:612px">    <span class="k">health</span>:</div>
<div class="ln" style="left:935.5px;top:648px;color:#606366">32</div>
<div class="cl" style="left:1078px;top:648px">      <span class="k">enabled</span>: <span class="k">true</span> <span class="c"># <span class="cj">是否开启。默认为</span> true <span class="cj">开启。</span></span></div>
<div class="ln" style="left:935.5px;top:684px;color:#606366">33</div>
<div class="cl" style="left:1078px;top:684px">      <span class="k">show<span class="h">-</span>details</span>: <span class="pi">ALWAYS</span> <span class="c"># <span class="cj">何时显示完整的健康信息。默认为</span> NEVER <span class="cj">都不展</span></span></div>
<svg style="left:1060px;top:728px" width="16" height="20" viewBox="0 0 16 20"><path d="M1,19 L15,19 L15,7.6 L8,1.4 L1,7.6 Z" fill="#2b2b2b" stroke="#585858" stroke-width="2"/><rect x="4" y="11" width="8" height="2" fill="#585858"/></svg>
<div class="cl" style="left:1078px;top:720px"><span class="w"></span><span class="c"><span class="cj">示。可选</span> WHEN_AUTHORIZED <span class="cj">当经过授权的用户；可选</span> ALWAYS <span class="cj">总是展示。</span></span></div>
<div class="ln" style="left:935.5px;top:756px;color:#606366">34</div>
<svg style="left:2024px;top:73px" width="26" height="22" viewBox="0 0 26 22"><path d="M2,10 L9,17 L23,3" fill="none" stroke="#499c54" stroke-width="4.6"/></svg>
<div style="left:2022px;top:102px;width:28px;height:6px;background:#066e12"></div>
<div style="left:2050px;top:16px;width:2px;height:1420px;background:#323232"></div>
<div style="left:2052px;top:16px;width:1088px;height:52px;background:#3c3f41"></div>
<div style="left:2052px;top:16px;width:672px;height:48px;background:#4e5254"></div>
<div style="left:2724px;top:16px;width:2px;height:48px;background:#323232"></div>
<div style="left:2068px;top:15px;width:40px;height:50px;font:italic bold 35px/50px 'Liberation Sans',sans-serif;color:#3f9bbb;transform:scale(1.05,1.04);transform-origin:0 50%">m</div>
<div style="left:2108px;top:26px;font-size:23.2px;line-height:32px;color:#62a055;white-space:pre;-webkit-text-stroke:0.4px;letter-spacing:0.26px">pom.xml (labx-11-sc-stream-kafka-consumer-actuator)</div>
<svg style="left:2694px;top:34.5px" width="16" height="16" viewBox="0 0 16 16"><path d="M0.5,0.5 L15,15 M15,0.5 L0.5,15" stroke="#6e7275" stroke-width="1.6"/></svg>
<div style="left:2052px;top:68px;width:1088px;height:1368px;background:#2b2b2b"></div>
<div style="left:2052px;top:68px;width:110px;height:1368px;background:#313335"></div>
<div style="left:2052px;top:64px;width:674px;height:6px;background:#4a88c7"></div>
<div style="left:2162px;top:1258px;width:978px;height:36px;background:#323232"></div>
<div style="left:2052px;top:1258px;width:110px;height:36px;background:#333537"></div>
<div style="left:2284px;top:1150px;width:168px;height:36px;background:#3b514d"></div>
<div style="left:2284px;top:1258px;width:182px;height:36px;background:#3b514d"></div>
<div style="left:2161px;top:70px;width:2px;height:1366px;background:#555555"></div>
<div style="left:2144px;top:1150px;width:2px;height:144px;background:#4f7d76"></div>
<div style="left:2232px;top:862px;width:2px;height:144px;background:#393939"></div>
<div style="left:2232px;top:1042px;width:2px;height:252px;background:#393939"></div>
<div style="left:2288px;top:1186px;width:2px;height:72px;background:#393939"></div>
<div class="ln" style="left:2029.5px;top:72px;color:#606366">1</div>
<div class="cl" style="left:2172px;top:72px"><span class="t">&lt;?</span><span class="a">xml version</span><span class="s">="1.0"</span><span class="a"> encoding</span><span class="s">="UTF<span class="h">-</span>8"</span><span class="t">?&gt;</span></div>
<div class="ln" style="left:2029.5px;top:108px;color:#606366">2</div>
<svg style="left:2154px;top:120px" width="16" height="20" viewBox="0 0 16 20"><path d="M1,1 L15,1 L15,12.4 L8,18.6 L1,12.4 Z" fill="#2b2b2b" stroke="#585858" stroke-width="2"/><rect x="4" y="7" width="8" height="2" fill="#585858"/></svg>
<div class="cl" style="left:2172px;top:108px"><span class="t">&lt;project</span><span class="a"> xmlns</span><span class="s">="http://maven.apache.org/POM/4.0.0"</span></div>
<div class="ln" style="left:2029.5px;top:144px;color:#606366">3</div>
<div class="cl" style="left:2172px;top:144px">         <span class="a">xmlns:</span><span class="p">xsi</span><span class="s">="http://www.w3.org/2001/XMLSchema<span class="h">-</span>instance"</span></div>
<div class="ln" style="left:2029.5px;top:180px;color:#606366">4</div>
<div class="cl" style="left:2172px;top:180px">         <span class="p">xsi</span><span class="a">:schemaLocation</span><span class="s">="http://maven.apache.org/POM/4.0.0</span></div>
<div class="cl" style="left:2172px;top:216px"><span class="w"></span><span class="s">http://maven.apache.org/xsd/maven<span class="h">-</span>4.0.0.xsd"</span><span class="t">&gt;</span></div>
<div class="ln" style="left:2029.5px;top:252px;color:#606366">5</div>
<svg style="left:2154px;top:264px" width="16" height="16" viewBox="0 0 16 16"><rect x="1" y="1" width="14" height="14" fill="#2b2b2b" stroke="#585858" stroke-width="2"/><rect x="4" y="7" width="8" height="2" fill="#585858"/><rect x="7" y="4" width="2" height="8" fill="#585858"/></svg>
<div class="cl" style="left:2172px;top:252px">    <span class="t">&lt;parent</span><span class="f">...</span><span class="t">&gt;</span></div>
<div class="ln" style="left:2029.5px;top:288px;color:#606366">10</div>
<div class="cl" style="left:2172px;top:288px">    <span class="t">&lt;modelVersion&gt;</span>4.0.0<span class="t">&lt;/modelVersion&gt;</span></div>
<div class="ln" style="left:2029.5px;top:324px;color:#606366">11</div>
<div class="ln" style="left:2029.5px;top:360px;color:#606366">12</div>
<div class="cl" style="left:2172px;top:360px">    <span class="t">&lt;artifactId&gt;</span>labx<span class="h">-</span>11<span class="h">-</span>sc<span class="h">-</span>stream<span class="h">-</span>kafka<span class="h">-</span>consumer<span class="h">-</span>actuator</div>
<div class="cl" style="left:2172px;top:396px"><span class="w"></span><span class="t">&lt;/artifactId&gt;</span></div>
<div class="ln" style="left:2029.5px;top:432px;color:#606366">13</div>
<div class="ln" style="left:2029.5px;top:468px;color:#606366">14</div>
<svg style="left:2154px;top:480px" width="16" height="16" viewBox="0 0 16 16"><rect x="1" y="1" width="14" height="14" fill="#2b2b2b" stroke="#585858" stroke-width="2"/><rect x="4" y="7" width="8" height="2" fill="#585858"/><rect x="7" y="4" width="2" height="8" fill="#585858"/></svg>
<div class="cl" style="left:2172px;top:468px">    <span class="t">&lt;properties</span><span class="f">...</span><span class="t">&gt;</span></div>
<div class="ln" style="left:2029.5px;top:504px;color:#606366">20</div>
<div class="ln" style="left:2029.5px;top:540px;color:#606366">21</div>
<svg style="left:2154px;top:552px" width="16" height="20" viewBox="0 0 16 20"><path d="M1,1 L15,1 L15,12.4 L8,18.6 L1,12.4 Z" fill="#2b2b2b" stroke="#585858" stroke-width="2"/><rect x="4" y="7" width="8" height="2" fill="#585858"/></svg>
<div class="cl" style="left:2172px;top:540px">    <span class="g">&lt;!<span class="h">-</span><span class="h">-</span></span></div>
<div class="ln" style="left:2029.5px;top:576px;color:#606366">22</div>
<div class="cl" style="left:2172px;top:576px">        <span class="g"><span class="cj">引入</span> Spring Boot<span class="cj">、</span>Spring Cloud<span class="cj">、</span>Spring Cloud Alibaba <span class="cj">三者</span> BOM</span></div>
<div class="cl" style="left:2172px;top:612px"><span class="w"></span><span class="g"><span class="cj">文件，进行依赖版本的管理，防止不兼容。</span></span></div>
<div class="ln" style="left:2029.5px;top:648px;color:#606366">23</div>
<div class="cl" style="left:2172px;top:648px">        <span class="g"><span class="cj">在</span> </span><span class="lk">https://dwz.cn/mcLIfNKt</span><span class="g"> <span class="cj">文章中，</span>Spring Cloud Alibaba <span class="cj">开发团</span></span></div>
<div class="cl" style="left:2172px;top:684px"><span class="w"></span><span class="g"><span class="cj">队推荐了三者的依赖关系</span></span></div>
<div class="ln" style="left:2029.5px;top:720px;color:#606366">24</div>
<svg style="left:2154px;top:728px" width="16" height="20" viewBox="0 0 16 20"><path d="M1,19 L15,19 L15,7.6 L8,1.4 L1,7.6 Z" fill="#2b2b2b" stroke="#585858" stroke-width="2"/><rect x="4" y="11" width="8" height="2" fill="#585858"/></svg>
<div class="cl" style="left:2172px;top:720px">     <span class="g"><span class="h">-</span><span class="h">-</span>&gt;</span></div>
<div class="ln" style="left:2029.5px;top:756px;color:#606366">25</div>
<svg style="left:2154px;top:768px" width="16" height="16" viewBox="0 0 16 16"><rect x="1" y="1" width="14" height="14" fill="#2b2b2b" stroke="#585858" stroke-width="2"/><rect x="4" y="7" width="8" height="2" fill="#585858"/><rect x="7" y="4" width="2" height="8" fill="#585858"/></svg>
<div class="cl" style="left:2172px;top:756px">    <span class="t">&lt;dependencyManagement</span><span class="f">...</span><span class="t">&gt;</span></div>
<div class="ln" style="left:2029.5px;top:792px;color:#606366">43</div>
<div class="ln" style="left:2029.5px;top:828px;color:#606366">44</div>
<svg style="left:2154px;top:840px" width="16" height="20" viewBox="0 0 16 20"><path d="M1,1 L15,1 L15,12.4 L8,18.6 L1,12.4 Z" fill="#2b2b2b" stroke="#585858" stroke-width="2"/><rect x="4" y="7" width="8" height="2" fill="#585858"/></svg>
<div class="cl" style="left:2172px;top:828px">    <span class="t">&lt;dependencies&gt;</span></div>
<div class="ln" style="left:2029.5px;top:864px;color:#606366">45</div>
<div class="cl" style="left:2172px;top:864px">        <span class="g">&lt;!<span class="h">-</span><span class="h">-</span> <span class="cj">引入</span> SpringMVC <span class="cj">相关依赖，并实现对其的自动配置</span> <span class="h">-</span><span class="h">-</span>&gt;</span></div>
<div class="ln" style="left:2029.5px;top:900px;color:#606366">46</div>
<svg style="left:2154px;top:912px" width="16" height="16" viewBox="0 0 16 16"><rect x="1" y="1" width="14" height="14" fill="#2b2b2b" stroke="#585858" stroke-width="2"/><rect x="4" y="7" width="8" height="2" fill="#585858"/><rect x="7" y="4" width="2" height="8" fill="#585858"/></svg>
<div class="cl" style="left:2172px;top:900px">        <span class="t">&lt;dependency</span><span class="f">...</span><span class="t">&gt;</span></div>
<div class="ln" style="left:2029.5px;top:936px;color:#606366">50</div>
<div class="ln" style="left:2029.5px;top:972px;color:#606366">51</div>
<div class="cl" style="left:2172px;top:972px">        <span class="g">&lt;!<span class="h">-</span><span class="h">-</span> <span class="cj">引入</span> Spring Cloud Stream Kafka <span class="cj">相关依赖，将</span> Kafka <span class="cj">作为消息</span></span></div>
<div class="cl" style="left:2172px;top:1008px"><span class="w"></span><span class="g"><span class="cj">队列，并实现对其的自动配置</span> <span class="h">-</span><span class="h">-</span>&gt;</span></div>
<div class="ln" style="left:2029.5px;top:1044px;color:#606366">52</div>
<svg style="left:2154px;top:1056px" width="16" height="16" viewBox="0 0 16 16"><rect x="1" y="1" width="14" height="14" fill="#2b2b2b" stroke="#585858" stroke-width="2"/><rect x="4" y="7" width="8" height="2" fill="#585858"/><rect x="7" y="4" width="2" height="8" fill="#585858"/></svg>
<div class="cl" style="left:2172px;top:1044px">        <span class="t">&lt;dependency</span><span class="f">...</span><span class="t">&gt;</span></div>
<div class="ln" style="left:2029.5px;top:1080px;color:#606366">56</div>
<div class="ln" style="left:2029.5px;top:1116px;color:#606366">57</div>
<div class="cl" style="left:2172px;top:1116px">        <span class="g">&lt;!<span class="h">-</span><span class="h">-</span> <span class="cj">实现对</span> Actuator <span class="cj">的自动化配置</span> <span class="h">-</span><span class="h">-</span>&gt;</span></div>
<div class="ln" style="left:2029.5px;top:1152px;color:#606366">58</div>
<svg style="left:2154px;top:1164px" width="16" height="20" viewBox="0 0 16 20"><path d="M1,1 L15,1 L15,12.4 L8,18.6 L1,12.4 Z" fill="#2b2b2b" stroke="#585858" stroke-width="2"/><rect x="4" y="7" width="8" height="2" fill="#585858"/></svg>
<div class="cl" style="left:2172px;top:1152px">        <span class="y">&lt;</span><span class="t">dependency&gt;</span></div>
<div class="ln" style="left:2029.5px;top:1188px;color:#606366">59</div>
<div class="cl" style="left:2172px;top:1188px">            <span class="t">&lt;groupId&gt;</span>org.springframework.boot<span class="t">&lt;/groupId&gt;</span></div>
<div class="ln" style="left:2029.5px;top:1224px;color:#606366">60</div>
<div class="cl" style="left:2172px;top:1224px">            <span class="t">&lt;artifactId&gt;</span>spring<span class="h">-</span>boot<span class="h">-</span>starter<span class="h">-</span>actuator<span class="t">&lt;/artifactId&gt;</span></div>
<div class="ln" style="left:2029.5px;top:1260px;color:#a4a3a3">61</div>
<svg style="left:2154px;top:1268px" width="16" height="20" viewBox="0 0 16 20"><path d="M1,19 L15,19 L15,7.6 L8,1.4 L1,7.6 Z" fill="#2b2b2b" stroke="#585858" stroke-width="2"/><rect x="4" y="11" width="8" height="2" fill="#585858"/></svg>
<div class="cl" style="left:2172px;top:1260px">        <span class="t">&lt;/dependency</span><span class="y">&gt;</span></div>
<div class="ln" style="left:2029.5px;top:1296px;color:#606366">62</div>
<svg style="left:2154px;top:1304px" width="16" height="20" viewBox="0 0 16 20"><path d="M1,19 L15,19 L15,7.6 L8,1.4 L1,7.6 Z" fill="#2b2b2b" stroke="#585858" stroke-width="2"/><rect x="4" y="11" width="8" height="2" fill="#585858"/></svg>
<div class="cl" style="left:2172px;top:1296px">    <span class="t">&lt;/dependencies&gt;</span></div>
<div class="ln" style="left:2029.5px;top:1332px;color:#606366">63</div>
<div class="ln" style="left:2029.5px;top:1368px;color:#606366">64</div>
<svg style="left:2154px;top:1376px" width="16" height="20" viewBox="0 0 16 20"><path d="M1,19 L15,19 L15,7.6 L8,1.4 L1,7.6 Z" fill="#2b2b2b" stroke="#585858" stroke-width="2"/><rect x="4" y="11" width="8" height="2" fill="#585858"/></svg>
<div class="cl" style="left:2172px;top:1368px"><span class="t">&lt;/project&gt;</span></div>
<div class="ln" style="left:2029.5px;top:1404px;color:#606366">65</div>
<div style="left:2465px;top:1262px;width:4px;height:29px;background:#bbbbbb"></div>
<div style="left:2105px;top:249px;width:20px;height:36px;font:italic bold 19px/36px 'Liberation Sans',sans-serif;color:#40b6e0">m</div>
<svg style="left:2119px;top:255px" width="12" height="26" viewBox="0 0 12 26"><path d="M6,3 L6,25" stroke="#db5860" stroke-width="1.6"/><path d="M1,7.5 L6,0.5 L11,7.5 Z" fill="#db5860"/></svg>
<svg style="left:3118px;top:71px" width="30" height="30" viewBox="0 0 30 30"><path d="M3.5,9.5 L11,17 L26,2" fill="none" stroke="#499c54" stroke-width="5.4"/><path d="M2,26.5 L7.5,21 L11.5,25.5 L15.5,21 L19.5,25.5 L24,21" fill="none" stroke="#499c54" stroke-width="1.9"/></svg>
<div style="left:2726px;top:68px;width:414px;height:2px;background:#313234"></div>
<div class="box" style="left:13.4px;top:51.8px;width:943.8000000000001px;height:508.99999999999994px"></div>
<div class="box" style="left:13.4px;top:896.3px;width:735.6px;height:161.9000000000001px"></div>
<div class="box" style="left:1055px;top:318.3px;width:990.5px;height:467.7px"></div>
<div class="box" style="left:2252.8px;top:1093px;width:842.6999999999998px;height:214.5px"></div>
<div class="ann" style="left:311px;top:132.5px"><span style="font-size:47.6px;font-weight:350;letter-spacing:1.5px;position:relative;left:0.6px;top:0.5px;">消费者</span></div>
<div class="ann" style="left:321px;top:970.5px"><span style="font-size:47.6px;font-weight:350;letter-spacing:1.5px;position:relative;left:0.6px;top:0.5px;">生产者</span></div>
<div class="ann" style="left:1415.5px;top:810.5px"><span style="font-size:47.6px;font-weight:350;letter-spacing:1.5px;position:relative;left:0.6px;top:0.5px;">设置</span><span style="font-size:46.6px;letter-spacing:0.3px;margin-left:-1.2px;"> Actuator </span><span style="font-size:47.6px;font-weight:350;letter-spacing:1.5px;position:relative;left:0.6px;top:0.5px;margin-left:-1.2px;">的配置项</span></div>
<div class="ann" style="left:2491.5px;top:1317px"><span style="font-size:47.6px;font-weight:350;letter-spacing:1.5px;position:relative;left:0.6px;top:0.5px;">引入</span><span style="font-size:46.6px;letter-spacing:0.3px;margin-left:-1.2px;"> Spring Boot Actuator </span><span style="font-size:47.6px;font-weight:350;letter-spacing:1.5px;position:relative;left:0.6px;top:0.5px;margin-left:-1.2px;">依赖</span></div>
</body></html>
